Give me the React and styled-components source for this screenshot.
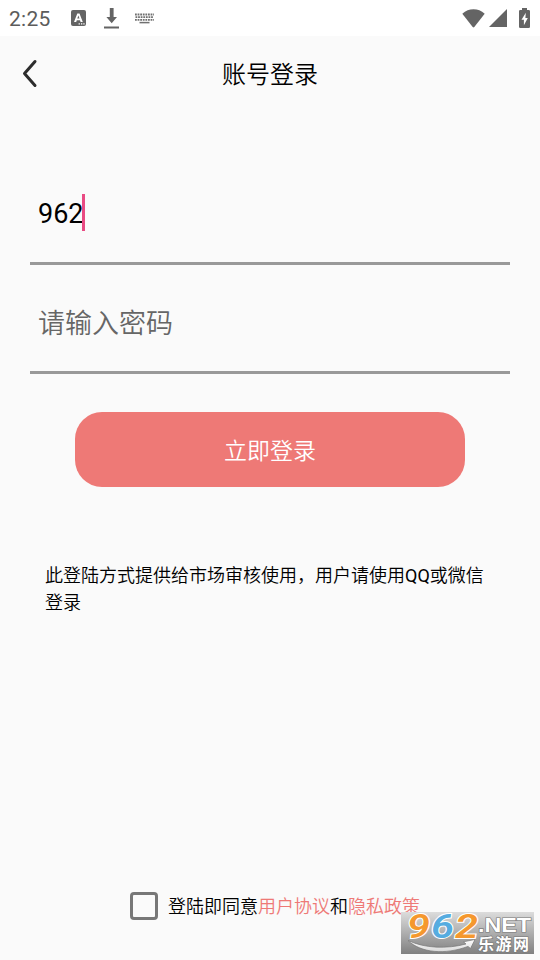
import styled, { createGlobalStyle } from 'styled-components';

const GlobalStyle = createGlobalStyle`
  * {
    box-sizing: border-box;
  }

  body {
    margin: 0;
    background: #fafafa;
    color: #000;
    font-family: Roboto, 'Noto Sans CJK SC', sans-serif;
    font-weight: 350;
  }
`;

export default function App() {
  return (
    <>
      <GlobalStyle />
      <Screen>
        <StatusBar />
        <Header>
          <BackButton aria-label="返回">
            <svg width="17" height="30" viewBox="0 0 17 30">
              <path d="M13 2.5 2.5 14.5 13 26.5" fill="none" stroke="#2c2c2c" strokeWidth="3" strokeLinecap="round" strokeLinejoin="round" />
            </svg>
          </BackButton>
          <Title>账号登录</Title>
        </Header>

        <Form>
          <Field>
            <span>962</span>
            <Caret />
          </Field>
          <Field isPlaceholder>
            <span>请输入密码</span>
          </Field>
          <LoginButton>立即登录</LoginButton>
          <Notice>
            此登陆方式提供给市场审核使用，用户请使用<Latin>QQ</Latin>或微信登录
          </Notice>
        </Form>

        <Agreement>
          <Checkbox />
          <p>
            登陆即同意<Link>用户协议</Link>和<Link>隐私政策</Link>
          </p>
        </Agreement>
        <Watermark />
      </Screen>
    </>
  );
}

function StatusBar() {
  return (
    <StatusBarStyle>
      <Clock>2:25</Clock>
      <Notifications>
        <svg width="15" height="16" viewBox="0 0 15 16">
          <rect width="15" height="16" rx="2" fill="#646464" />
          <path d="M3 12 6.3 3.4h2.2L11.8 12H9.6l-.6-1.8H5.8L5.2 12Zm3.3-3.4h2.2L7.4 5.5Z" fill="#fff" />
          <path d="M7.6 13.2h1.3v1.2H7.6zM10 13.2h1.3v1.2H10zM12.3 13.2h1.3v1.2h-1.3z" fill="#fff" />
        </svg>
        <svg width="15" height="21" viewBox="0 0 15 21">
          <path d="M5.8 0h3.8v9H13l-5.3 6.2L2.4 9h3.4zM0 18.4h15v2.2H0z" fill="#646464" />
        </svg>
        <svg width="19" height="11" viewBox="0 0 19 11">
          <path d="M0 1.5h19M.5 4.2h18M0 6.9h19" stroke="#707070" strokeWidth="1.8" strokeDasharray="1.8 .8" />
          <path d="M4.5 9.6h10" stroke="#707070" strokeWidth="1.5" />
        </svg>
      </Notifications>
      <SystemIcons>
        <svg width="23" height="19" viewBox="0 0 23 19">
          <path d="M.3 4.7C3.7 1.6 7.3.2 11.5.2s7.8 1.4 11.2 4.5L12.3 18q-.8.9-1.6 0Z" fill="#646464" />
        </svg>
        <svg width="18" height="18" viewBox="0 0 18 18">
          <path d="M18 0v18H0z" fill="#646464" />
        </svg>
        <svg width="11" height="20" viewBox="0 0 11 20">
          <path d="M3 0h5v2h1.7Q11 2 11 3.3v15.4q0 1.3-1.3 1.3H1.3Q0 20 0 18.7V3.3Q0 2 1.3 2H3z" fill="#646464" />
          <path d="M6.8 4.8 2.5 11.7h2.4v5.5l3.9-7.3H6.4z" fill="#fff" />
        </svg>
      </SystemIcons>
    </StatusBarStyle>
  );
}

function Watermark() {
  return (
    <WatermarkStyle>
      <svg width="133" height="42" viewBox="0 0 133 42">
        <defs>
          <linearGradient id="swoosh" x1="0" y1="0" x2="0" y2="1">
            <stop offset="0" stopColor="#fff" />
            <stop offset="1" stopColor="#d8d8d8" />
          </linearGradient>
        </defs>
        <path d="M7 28.5C24 36.5 46 37 65 32l-2.5-2.2L74 27.5l-4.5 9L67 34.4C44 43 20 41 7 28.5Z" fill="url(#swoosh)" stroke="#777" strokeWidth=".7" />
        <LogoDigits>
          <text x="6" y="26" textLength="23" lengthAdjust="spacingAndGlyphs" fill="#f5982e">9</text>
          <text x="30" y="26" textLength="23" lengthAdjust="spacingAndGlyphs" fill="#56ace0">6</text>
          <text x="54" y="26" textLength="23" lengthAdjust="spacingAndGlyphs" fill="#f5982e">2</text>
        </LogoDigits>
        <LogoNet x="77" y="20" textLength="53" lengthAdjust="spacingAndGlyphs">.NET</LogoNet>
        <LogoName x="77" y="38" textLength="51">乐游网</LogoName>
      </svg>
    </WatermarkStyle>
  );
}

const Screen = styled.div`
  position: relative;
  display: flex;
  flex-direction: column;
  height: 960px;
  overflow: hidden;
`;

const StatusBarStyle = styled.div`
  display: flex;
  align-items: center;
  height: 36px;
  padding: 0 10px 0 9px;
  background: #fff;
  color: #5c5c5c;
`;

const Clock = styled.span`
  width: 62px;
  padding-top: 1px;
  font-size: 21px;
  font-weight: 400;
  letter-spacing: 0.3px;
  line-height: 36px;
`;

const Notifications = styled.div`
  display: flex;
  align-items: center;
  gap: 18px;

  svg:last-child {
    margin-left: -2px;
  }
`;

const SystemIcons = styled.div`
  display: flex;
  align-items: center;
  margin-left: auto;
  gap: 4px;

  svg:last-child {
    margin-left: 8px;
  }
`;

const Header = styled.header`
  display: flex;
  align-items: center;
  height: 75px;
  padding: 0 22px;
`;

const BackButton = styled.button`
  display: flex;
  width: 17px;
  padding: 0;
  border: 0;
  background: none;
`;

const Title = styled.h1`
  flex: 1;
  margin: 3px 17px 0 0;
  font-size: 24px;
  font-weight: inherit;
  line-height: 36px;
  text-align: center;
`;

const Form = styled.main`
  display: flex;
  flex-direction: column;
  padding: 45px 30px 0;
`;

const Field = styled.div`
  display: flex;
  align-items: center;
  height: 109px;
  padding: 6px 8px 0;
  border-bottom: 3px solid #999;
  color: ${(props) => (props.isPlaceholder ? '#666' : '#000')};
  font-size: 27px;
  font-weight: ${(props) => (props.isPlaceholder ? 350 : 400)};
  line-height: 40px;

  span {
    padding-top: ${(props) => (props.isPlaceholder ? 6 : 4)}px;
  }
`;

const Caret = styled.i`
  width: 3px;
  height: 37px;
  margin-left: -2px;
  background: #e94b83;
`;

const LoginButton = styled.button`
  height: 75px;
  margin: 38px 45px 0;
  padding: 0 0 2px;
  border: 0;
  border-radius: 27px;
  background: #ee7976;
  color: #fff;
  font-family: inherit;
  font-size: 23px;
  font-weight: inherit;
`;

const Notice = styled.p`
  margin: 75px 15px 0;
  font-size: 18px;
  line-height: 27px;
`;

const Latin = styled.span`
  font-weight: 400;
`;

const Agreement = styled.footer`
  display: flex;
  align-items: center;
  margin: auto 0 36px 130px;

  p {
    margin: 2px 0 0 10px;
    font-size: 18px;
    line-height: 34px;
  }
`;

const Checkbox = styled.span`
  width: 28px;
  height: 28px;
  border: 3px solid #777;
  border-radius: 4px;
`;

const Link = styled.span`
  color: #ee7976;
`;

// sits over the end of the agreement line
const WatermarkStyle = styled.div`
  position: absolute;
  right: 6px;
  bottom: 6px;
  width: 133px;
  height: 42px;
  background: linear-gradient(#dcdcdc, #808080);

  svg {
    display: block;
    overflow: visible;
  }
`;

const LogoDigits = styled.g`
  font: italic 600 34px Roboto, sans-serif;
  stroke: #fff;
  stroke-width: 2px;
  paint-order: stroke;
`;

const LogoNet = styled.text`
  font: 700 20px 'Liberation Sans', sans-serif;
  fill: #fff;
  stroke: #777;
  stroke-width: 1.2px;
  paint-order: stroke;
`;

const LogoName = styled.text`
  font: 700 16px 'Noto Sans CJK SC', sans-serif;
  fill: #fff;
  stroke: #777;
  stroke-width: 1.2px;
  paint-order: stroke;
`;
